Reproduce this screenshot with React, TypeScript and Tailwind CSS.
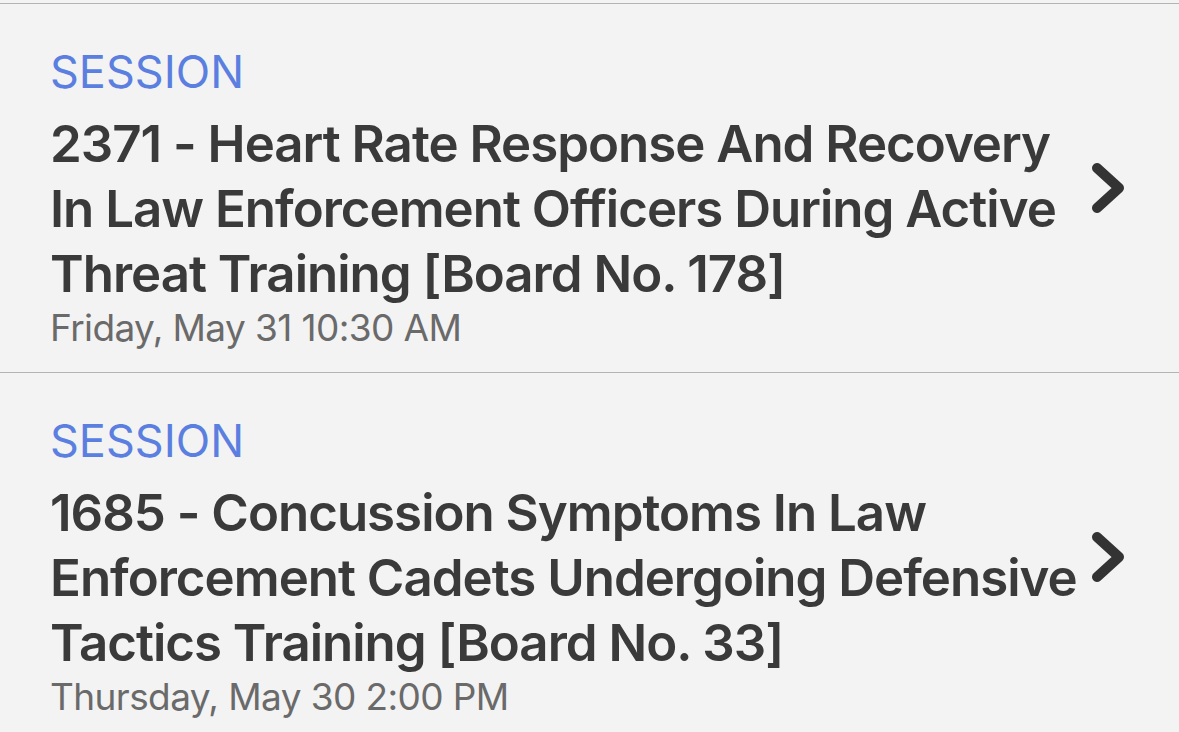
import React from "react";

type Session = {
  title: string;
  when: string;
};

const sessions: Session[] = [
  {
    title:
      "2371 - Heart Rate Response And Recovery In Law Enforcement Officers During Active Threat Training [Board No. 178]",
    when: "Friday, May 31 10:30 AM",
  },
  {
    title:
      "1685 - Concussion Symptoms In Law Enforcement Cadets Undergoing Defensive Tactics Training [Board No. 33]",
    when: "Thursday, May 30 2:00 PM",
  },
];

const Chevron: React.FC = () => (
  <svg width="34" height="52" viewBox="0 0 34 52" fill="none">
    <path
      d="M6 6 L28 26 L6 46"
      stroke="#333333"
      strokeWidth="10"
      strokeLinecap="round"
      strokeLinejoin="round"
    />
  </svg>
);

const SessionRow: React.FC<{ item: Session }> = ({ item }) => {
  return (
    <div className="flex items-center h-[369px] border-b border-[#b4b4b4] pl-[50px] pr-[54px]">
      <div className="flex-1 flex flex-col pt-[42px] pb-[22px]">
        <span className="text-[45px] leading-[52px] text-[#5b7fe0] font-normal">
          SESSION
        </span>
        <span className="mt-[13px] text-[51px] leading-[65px] tracking-[-1px] font-semibold text-[#3a3a3a]">
          {item.title}
        </span>
        <span className="text-[37px] leading-[44px] tracking-[-0.6px] text-[#6a6a6a]">
          {item.when}
        </span>
      </div>
      <div className="ml-[2px] flex items-center">
        <Chevron />
      </div>
    </div>
  );
};

export default function App() {
  return (
    <div
      className="w-[1179px] h-[732px] overflow-hidden bg-[#f3f3f3] pt-[3px]"
      style={{ fontFamily: "Inter, 'Noto Sans', sans-serif" }}
    >
      <div className="border-t border-[#b4b4b4]">
        {sessions.map((s) => (
          <SessionRow key={s.title} item={s} />
        ))}
      </div>
    </div>
  );
}
